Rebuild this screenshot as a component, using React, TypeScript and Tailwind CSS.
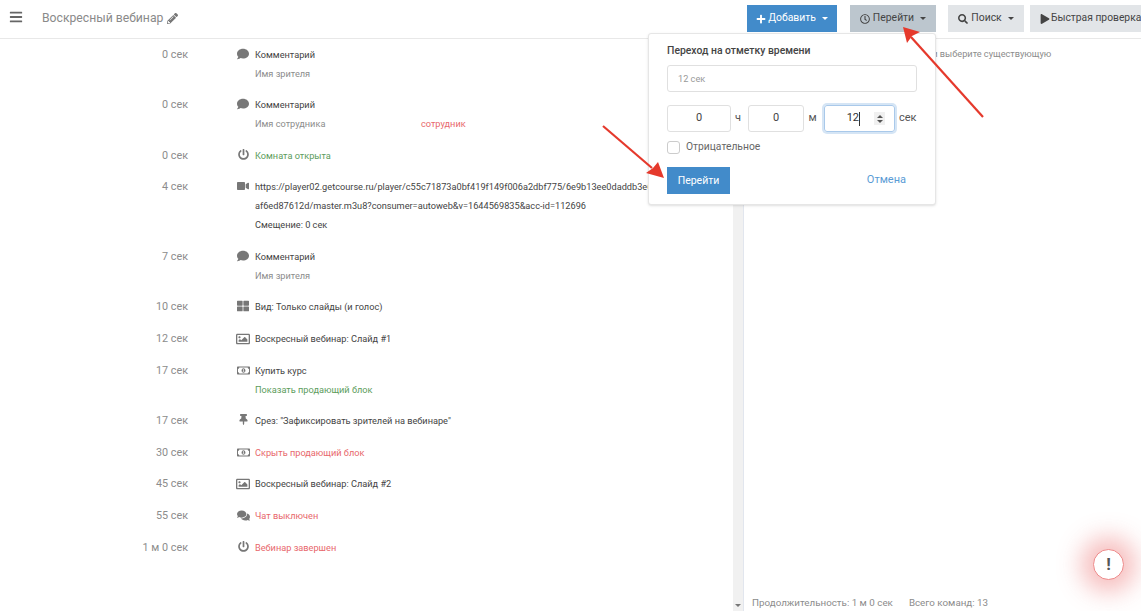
import { FaBars, FaComment, FaComments, FaPencilAlt, FaPlay, FaPlus, FaPowerOff, FaRegClock, FaRegImage, FaRegMoneyBillAlt, FaSearch, FaThLarge, FaThumbtack, FaVideo } from "react-icons/fa";
import type { ReactNode } from "react";

type Row = { time: string; icon: ReactNode; lines: ReactNode[] };

const red = "text-[#e8686c]";
const green = "text-[#5c9c5c]";
const muted = "text-[#8c8c8c]";

const rows: Row[] = [
  { time: "0 сек", icon: <FaComment size={12} />, lines: ["Комментарий", <span className={muted}>Имя зрителя</span>] },
  {
    time: "0 сек",
    icon: <FaComment size={12} />,
    lines: [
      "Комментарий",
      <span className="flex">
        <span className={`w-[166px] ${muted}`}>Имя сотрудника</span>
        <span className={red}>сотрудник</span>
      </span>,
    ],
  },
  { time: "0 сек", icon: <FaPowerOff size={11} />, lines: [<span className={green}>Комната открыта</span>] },
  {
    time: "4 сек",
    icon: <FaVideo size={12} />,
    lines: [
      "https://player02.getcourse.ru/player/c55c71873a0bf419f149f006a2dbf775/6e9b13ee0daddb3e68",
      "af6ed87612d/master.m3u8?consumer=autoweb&v=1644569835&acc-id=112696",
      "Смещение: 0 сек",
    ],
  },
  { time: "7 сек", icon: <FaComment size={12} />, lines: ["Комментарий", <span className={muted}>Имя зрителя</span>] },
  { time: "10 сек", icon: <FaThLarge size={12} />, lines: ["Вид: Только слайды (и голос)"] },
  { time: "12 сек", icon: <FaRegImage size={14} />, lines: ["Воскресный вебинар: Слайд #1"] },
  { time: "17 сек", icon: <FaRegMoneyBillAlt size={13} />, lines: ["Купить курс", <span className={green}>Показать продающий блок</span>] },
  { time: "17 сек", icon: <FaThumbtack size={11} />, lines: ['Срез: "Зафиксировать зрителей на вебинаре"'] },
  { time: "30 сек", icon: <FaRegMoneyBillAlt size={13} />, lines: [<span className={red}>Скрыть продающий блок</span>] },
  { time: "45 сек", icon: <FaRegImage size={14} />, lines: ["Воскресный вебинар: Слайд #2"] },
  { time: "55 сек", icon: <FaComments size={13} />, lines: [<span className={red}>Чат выключен</span>] },
  { time: "1 м 0 сек", icon: <FaPowerOff size={11} />, lines: [<span className={red}>Вебинар завершен</span>] },
];

function Caret() {
  return <span className="ml-[6px] h-0 w-0 border-x-[3px] border-t-[3px] border-x-transparent border-t-current" />;
}

function NumberBox({ value, width, focused }: { value: string; width: string; focused?: boolean }) {
  if (focused) {
    return (
      <div className={`relative flex h-[27px] ${width} items-center rounded-[3px] border border-[#a9c9ea] pl-[8px] text-[11px] text-[#333] shadow-[0_0_0_2px_#d5e5f5]`}>
        <span className="w-[26px] text-right">{value}</span>
        <span className="h-[14px] w-px bg-[#333]" />
        <span className="ml-[14px] flex h-[13px] w-[11px] flex-col items-center justify-center gap-[2px] bg-[#f0f0f0]">
          <span className="h-0 w-0 border-x-[3px] border-b-[3px] border-x-transparent border-b-[#555]" />
          <span className="h-0 w-0 border-x-[3px] border-t-[3px] border-x-transparent border-t-[#555]" />
        </span>
      </div>
    );
  }
  return <div className={`flex h-[27px] ${width} items-center justify-center rounded-[3px] border border-[#e0e0e0] text-[11px] text-[#444]`}>{value}</div>;
}

export default function App() {
  return (
    <div className="relative flex h-[611px] w-[1141px] flex-col overflow-hidden bg-white font-['Roboto','Noto_Sans',sans-serif] text-[9.2px] text-[#444]">
      {/* шапка */}
      <header className="flex h-[39px] shrink-0 items-start border-b border-[#e8e8e8] pl-[9px]">
        <FaBars size={14} className="mt-[10px] text-[#666]" />
        <div className="mt-[9px] ml-[19px] flex items-center gap-1 text-[12.2px] leading-[18px] text-[#8a8a8a]">
          Воскресный вебинар <FaPencilAlt size={11} className="text-[#777]" />
        </div>
        <div className="mt-[5px] ml-auto flex h-[27px] w-[394px] shrink-0 whitespace-nowrap text-[10.4px] leading-none">
          <div className="flex w-[90px] items-center justify-center bg-[#428bca] text-white">
            <FaPlus size={10} className="mr-[2px]" /> Добавить <Caret />
          </div>
          <div className="ml-[13px] flex w-[86px] items-center justify-center bg-[#bcc6ce] text-[#444]">
            <FaRegClock size={10} className="mr-[3px]" /> Перейти <Caret />
          </div>
          <div className="ml-[12px] flex w-[76px] items-center justify-center bg-[#e2e5e8] text-[#444]">
            <FaSearch size={10} className="mr-[3px]" /> Поиск <Caret />
          </div>
          <div className="ml-[6px] flex w-[111px] items-center bg-[#e2e5e8] pl-[10px] text-[10.3px] text-[#444]">
            <FaPlay size={10} className="mr-[1px] shrink-0" /> Быстрая проверка
          </div>
        </div>
      </header>

      <div className="flex min-h-0 flex-1">
        {/* команды */}
        <div className="w-[733px] shrink-0 overflow-hidden pt-[5.5px]">
          {rows.map((row, i) => (
            <div key={i} className="flex pb-[12.6px] leading-[19px]">
              <div className="w-[188px] shrink-0 text-right text-[10.8px] text-[#8c8c8c]">{row.time}</div>
              <div className="flex w-[67px] shrink-0 justify-end pt-[3px] pr-[5px] text-[#777]">
                <span className="flex w-[14px] justify-center">{row.icon}</span>
              </div>
              <div className="min-w-0 whitespace-nowrap">
                {row.lines.map((line, j) => (
                  <div key={j}>{line}</div>
                ))}
              </div>
            </div>
          ))}
        </div>

        {/* полоса прокрутки */}
        <div className="relative w-[11px] shrink-0 border-r border-[#e2e6ee] bg-[#f1f1f1]">
          <span className="absolute bottom-[4px] left-[2px] h-0 w-0 border-x-[3px] border-t-[3px] border-x-transparent border-t-[#777]" />
        </div>

        {/* правая панель */}
        <div className="flex min-w-0 flex-1 flex-col justify-between pl-2 whitespace-nowrap text-[#8c8c8c]">
          <div className="pt-[6px] pl-[1px] leading-[18px]">Чтобы изменить, нажмите на команду или выберите существующую</div>
          <div className="flex gap-[16px] text-[9.8px] leading-[16px]">
            <span>Продолжительность: 1 м 0 сек</span>
            <span>Всего команд: 13</span>
          </div>
        </div>
      </div>

      {/* всплывающее окно перехода */}
      <div className="absolute top-[33px] left-[648px] h-[172px] w-[288px] rounded-[3px] border border-[#e6e6e6] bg-white px-[18px] pt-[9px] shadow-sm">
        <div className="text-[10.4px] leading-[15px] font-medium text-[#444]">Переход на отметку времени</div>
        <div className="mt-[7px] flex h-[27px] items-center rounded-[3px] border border-[#e0e0e0] pl-[10px] text-[9.2px] text-[#999]">12 сек</div>
        <div className="mt-[13px] flex items-center text-[11px] text-[#555]">
          <NumberBox value="0" width="w-[64px]" />
          <span className="w-[17px] pr-[3px] text-center">ч</span>
          <NumberBox value="0" width="w-[56px]" />
          <span className="w-[20px] pr-[3px] text-center">м</span>
          <NumberBox value="12" width="w-[71px]" focused />
          <span className="ml-[4px]">сек</span>
        </div>
        <label className="mt-[8px] flex h-[14px] items-center text-[10.3px] text-[#666]">
          <span className="mr-[6px] h-[13px] w-[13px] rounded-[3px] border border-[#ccc]" />
          Отрицательное
        </label>
        <div className="mt-[13px] flex items-center justify-between pr-[11px]">
          <div className="flex h-[27px] w-[63px] items-center justify-center bg-[#428bca] text-[10.5px] text-white">Перейти</div>
          <span className="text-[11px] text-[#5a9bd5]">Отмена</span>
        </div>
      </div>

      {/* кнопка уведомлений */}
      <div className="absolute top-[549px] left-[1093px] flex h-[31px] w-[31px] items-center justify-center rounded-full border border-[#ee8a8a] bg-white text-[17px] font-bold text-[#555] shadow-[0_0_24px_12px_rgba(232,90,90,0.4)]">!</div>

      {/* стрелки */}
      <svg className="pointer-events-none absolute inset-0" width="1141" height="611" viewBox="0 0 1141 611" fill="none">
        <path d="M983 117 L911 37" stroke="#e5392c" strokeWidth="2.2" />
        <path d="M903 27 L920 32 L912 36 L907 43 Z" fill="#e5392c" />
        <path d="M603 126 L652 168" stroke="#e5392c" strokeWidth="2.2" />
        <path d="M664 178 L646 173 L653 168 L658 162 Z" fill="#e5392c" />
      </svg>
    </div>
  );
}
